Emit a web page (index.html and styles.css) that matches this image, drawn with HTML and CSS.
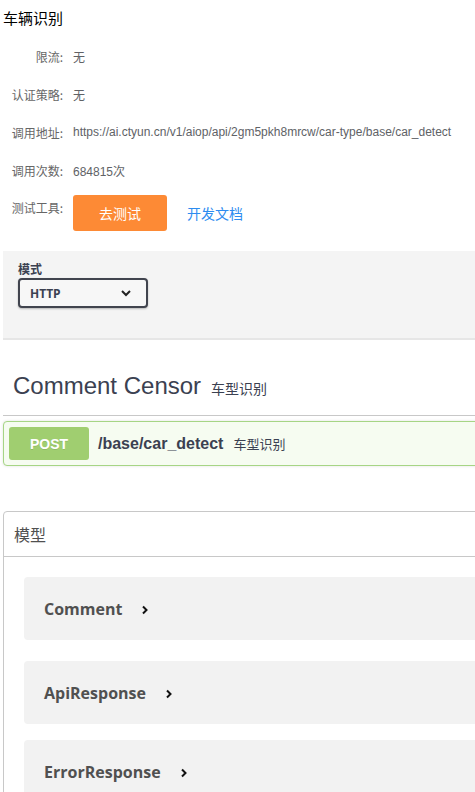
FILE: index.html
```html
<!DOCTYPE html>
<html lang="zh">
<head>
<meta charset="utf-8">
<title>车辆识别</title>
<link rel="stylesheet" href="styles.css">
</head>
<body>
<div class="page">
  <h1 class="title">车辆识别</h1>
  <div class="info">
    <div class="row"><span class="label">限流:</span><span class="value">无</span></div>
    <div class="row"><span class="label">认证策略:</span><span class="value">无</span></div>
    <div class="row"><span class="label">调用地址:</span><span class="value">https://ai.ctyun.cn/v1/aiop/api/2gm5pkh8mrcw/car-type/base/car_detect</span></div>
    <div class="row"><span class="label">调用次数:</span><span class="value">684815次</span></div>
    <div class="row row-tools"><span class="label">测试工具:</span><button class="btn-test">去测试</button><a class="doc-link" href="#">开发文档</a></div>
  </div>

  <div class="scheme-panel">
    <div class="scheme-label">模式</div>
    <div class="select"><span>HTTP</span>
      <svg class="select-arrow" width="12" height="8" viewBox="0 0 12 8"><path d="M2 2 L6 6 L10 2" fill="none" stroke="#222" stroke-width="2"/></svg>
    </div>
  </div>

  <div class="tag-header">
    <span class="tag-name">Comment Censor</span><span class="tag-desc">车型识别</span>
  </div>

  <div class="opblock">
    <span class="method">POST</span>
    <span class="path">/base/car_detect</span>
    <span class="summary">车型识别</span>
  </div>

  <section class="models">
    <div class="models-head">模型</div>
    <div class="models-body">
      <div class="model"><span class="model-name">Comment</span><svg class="chev" width="8" height="10" viewBox="0 0 8 10"><path d="M2 1.5 L5.5 5 L2 8.5" fill="none" stroke="#111" stroke-width="2"/></svg></div>
      <div class="model"><span class="model-name">ApiResponse</span><svg class="chev" width="8" height="10" viewBox="0 0 8 10"><path d="M2 1.5 L5.5 5 L2 8.5" fill="none" stroke="#111" stroke-width="2"/></svg></div>
      <div class="model model-last"><span class="model-name">ErrorResponse</span><svg class="chev" width="8" height="10" viewBox="0 0 8 10"><path d="M2 1.5 L5.5 5 L2 8.5" fill="none" stroke="#111" stroke-width="2"/></svg></div>
    </div>
  </section>
</div>
</body>
</html>
```

FILE: styles.css
```css
html, body {
  margin: 0;
  padding: 0;
  background: #fff;
  overflow: hidden;
}
body {
  font-family: "Liberation Sans", "Noto Sans CJK SC", sans-serif;
}
.page {
  width: 540px;
  padding-left: 3px;
}
.title {
  margin: 0;
  padding-top: 7px;
  height: 30px;
  font-size: 15px;
  line-height: 22px;
  font-weight: normal;
  color: #000;
  font-family: "Noto Sans CJK SC", sans-serif;
}
.info {
  display: flex;
  flex-direction: column;
}
.row {
  display: flex;
  align-items: center;
  height: 38px;
  font-size: 12px;
  color: #606266;
}
.label {
  width: 60px;
  text-align: right;
  margin-right: 10px;
  font-family: "Noto Sans CJK SC", sans-serif;
  color: #666;
}
.value {
  font-family: "Liberation Sans", "Noto Sans CJK SC", sans-serif;
  color: #606266;
}
.row-tools {
  align-items: flex-start;
  height: 42px;
}
.row-tools .label {
  line-height: 38px;
}
.btn-test {
  margin-top: 6px;
  width: 94px;
  height: 36px;
  border: none;
  border-radius: 3px;
  background: #fd8a35;
  color: #fff;
  font-size: 14px;
  font-family: "Noto Sans CJK SC", sans-serif;
  padding: 0;
}
.doc-link {
  margin-left: 20px;
  margin-top: 6px;
  line-height: 36px;
  font-size: 14px;
  color: #2d8cf0;
  text-decoration: none;
  font-family: "Noto Sans CJK SC", sans-serif;
}
.scheme-panel {
  margin-top: 20px;
  background: #f4f4f4;
  border-bottom: 2px solid #e6e6e6;
  padding: 9px 0 0 15px;
  box-sizing: border-box;
  height: 89px;
}
.scheme-label {
  font-size: 12px;
  font-weight: bold;
  color: #3b4151;
  line-height: 18px;
  font-family: "Noto Sans CJK SC", sans-serif;
}
.select {
  width: 130px;
  height: 30px;
  box-sizing: border-box;
  border: 2px solid #41444e;
  border-radius: 4px;
  background: #f7f7f7;
  display: flex;
  align-items: center;
  justify-content: space-between;
  padding: 0 14px 0 10px;
  font-family: "Open Sans", sans-serif;
  font-weight: bold;
  font-size: 12px;
  color: #3b4151;
  box-shadow: 0 1px 2px rgba(0,0,0,.25);
}
.tag-header {
  display: flex;
  align-items: baseline;
  padding: 32px 0 13px 10px;
  border-bottom: 1px solid #c8c8c8;
  line-height: 28px;
}
.tag-name {
  font-size: 24px;
  color: #3b4151;
  font-family: "Liberation Sans", sans-serif;
}
.tag-desc {
  margin-left: 10px;
  font-size: 14px;
  color: #3b4151;
  font-family: "Noto Sans CJK SC", sans-serif;
}
.opblock {
  margin-top: 5px;
  height: 45px;
  box-sizing: border-box;
  border: 1px solid #a6d585;
  border-radius: 4px;
  background: #f6fcf1;
  display: flex;
  align-items: center;
  padding: 0 5px;
  box-shadow: 0 0 3px rgba(0,0,0,.12);
}
.method {
  width: 80px;
  height: 33px;
  border-radius: 3px;
  background: #a0ce70;
  color: #fff;
  font-weight: bold;
  font-size: 14px;
  display: flex;
  align-items: center;
  justify-content: center;
  font-family: "Liberation Sans", sans-serif;
  text-shadow: 0 1px 0 rgba(0,0,0,.1);
}
.path {
  margin-left: 9px;
  font-weight: bold;
  font-size: 16px;
  color: #3b4151;
  font-family: "Liberation Sans", sans-serif;
}
.summary {
  margin-left: 10px;
  font-size: 13px;
  color: #3b4151;
  font-family: "Noto Sans CJK SC", sans-serif;
}
.models {
  margin-top: 45px;
  border: 1px solid #c8c8c8;
  border-radius: 4px;
}
.models-head {
  height: 44px;
  border-bottom: 1px solid #c8c8c8;
  padding-left: 10px;
  display: flex;
  align-items: center;
  font-size: 16px;
  color: #505050;
  font-family: "Noto Sans CJK SC", sans-serif;
}
.models-body {
  padding: 20px 0 0 20px;
  display: flex;
  flex-direction: column;
  gap: 21px;
}
.model {
  height: 63px;
  background: #f2f2f2;
  border-radius: 4px;
  display: flex;
  align-items: center;
  padding-left: 20px;
}
.model-last {
  margin-top: -5px;
}
.model-name {
  font-family: "Open Sans", sans-serif;
  font-weight: bold;
  font-size: 16px;
  color: #505050;
}
.chev {
  margin-left: 19px;
  margin-top: 2px;
}
```
